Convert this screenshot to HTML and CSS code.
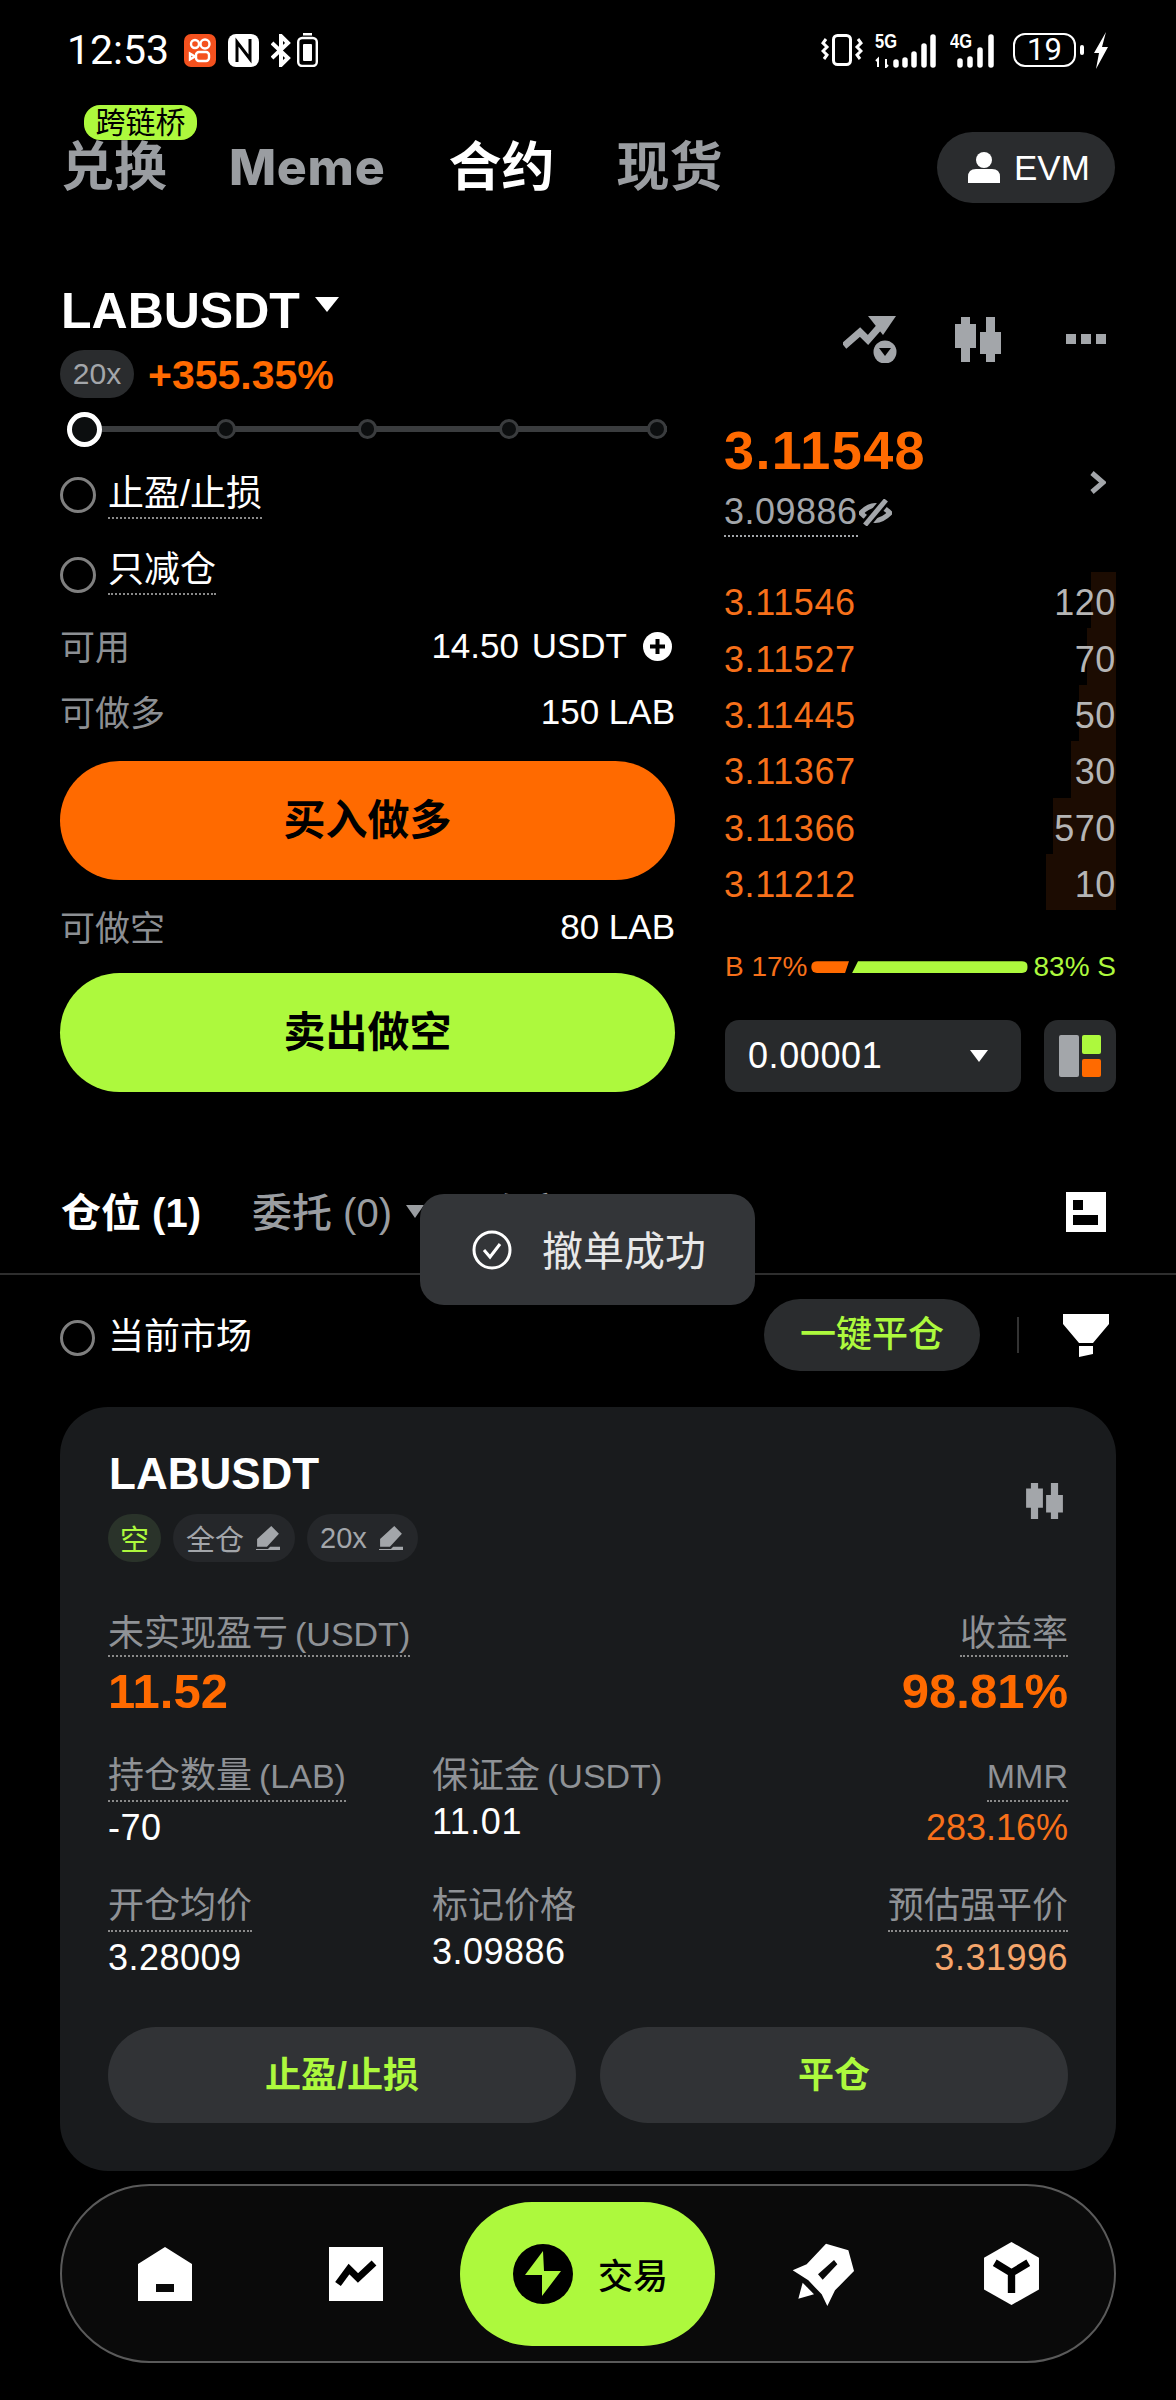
FILE: index.html
```html
<!DOCTYPE html>
<html lang="zh-CN">
<head>
    <meta charset="UTF-8">
    <meta name="viewport" content="width=device-width, initial-scale=1.0">
    <title>LABUSDT 合约</title>
    <link rel="stylesheet" href="styles.css">
</head>
<body>
    <!-- Status bar -->
    <div class="status">
        <span class="clock">12:53</span>
        <svg class="st-app" viewBox="0 0 32 33">
            <rect width="32" height="33" rx="7" fill="#f4511e"/>
            <g fill="none" stroke="#fff" stroke-width="2.4">
                <circle cx="11" cy="10" r="4"/>
                <circle cx="21" cy="10" r="4.5"/>
                <rect x="12" y="18" width="13" height="9" rx="3"/>
                <path d="M11 22.5 6 19.5v6z"/>
            </g>
        </svg>
        <svg class="st-nfc" viewBox="0 0 31 33">
            <rect width="31" height="33" rx="8" fill="#fff"/>
            <path d="M9 28V8l13 17V5" fill="none" stroke="#000" stroke-width="3"/>
        </svg>
        <svg class="st-bt" viewBox="0 0 20 33">
            <path d="M1 9l16 15-7 7V2l7 7L1 24" fill="none" stroke="#fff" stroke-width="4"/>
        </svg>
        <svg class="st-cell" viewBox="0 0 21 34">
            <rect x="6" y="0" width="9" height="2.5" fill="#fff"/>
            <rect x="1.2" y="5" width="18.6" height="28" rx="4" fill="none" stroke="#fff" stroke-width="2.4"/>
            <rect x="6" y="11" width="9" height="17" rx="1" fill="#fff"/>
        </svg>

        <div class="status-right">
            <svg class="st-vib" viewBox="0 0 42 32">
                <rect x="12.5" y="1.5" width="17" height="29" rx="4" fill="none" stroke="#fff" stroke-width="3"/>
                <path d="M5 5 2 9l4 4-4 4 4 4-3 4M37 5l3 4-4 4 4 4-4 4 3 4" fill="none" stroke="#fff" stroke-width="3"/>
            </svg>
            <svg class="st-net" viewBox="0 -6 62 42">
                <text class="net-text" x="0" y="16" textLength="22" lengthAdjust="spacingAndGlyphs">5G</text>
                <path d="M3 35v-8l-2 2M11 27v8l2-2" fill="none" stroke="#fff" stroke-width="2"/>
                <g fill="none" stroke="#fff" stroke-width="5.500" stroke-linecap="round">
                    <path d="M21 33v-3M30 33v-5M39 33v-11M49 33v-19M58 33V5"/>
                </g>
            </svg>
            <svg class="st-net2" viewBox="0 -6 46 42">
                <text class="net-text" x="0" y="16" textLength="22" lengthAdjust="spacingAndGlyphs">4G</text>
                <g fill="none" stroke="#fff" stroke-width="5.500" stroke-linecap="round">
                    <path d="M10 33v-4M20 33v-6M30 33V18M41 33V5"/>
                </g>
            </svg>
            <span class="st-batt">19</span>
            <span class="st-tip"></span>
            <svg class="st-bolt" viewBox="0 0 14 37">
                <path d="M12 0 0 21h5L2 37l12-22H8z" fill="#fff"/>
            </svg>
        </div>
    </div>

    <!-- Top tabs -->
    <div class="top-tabs">
        <div class="top-tab first">兑换<span class="bridge">跨链桥</span></div>
        <div class="top-tab meme">Meme</div>
        <div class="top-tab on">合约</div>
        <div class="top-tab">现货</div>
        <div class="evm">
            <svg class="evm-icon" viewBox="0 0 32 31">
                <circle cx="16" cy="8" r="8" fill="#fff"/>
                <path d="M0 31v-6q0-8 8-8h16q8 0 8 8v6z" fill="#fff"/>
            </svg>
            <span>EVM</span>
        </div>
    </div>

    <!-- Trade panel -->
    <div class="trade">
        <div class="trade-left">
            <div class="pair">LABUSDT<i class="caret caret-pair"></i></div>
            <div class="lev-row">
                <span class="lev">20x</span>
                <span class="gain">+355.35%</span>
            </div>
            <div class="slider">
                <span class="knob"></span>
                <span class="stop"></span>
                <span class="stop"></span>
                <span class="stop"></span>
                <span class="stop"></span>
            </div>
            <div class="check-row">
                <span class="radio"></span>
                <span class="check-label">止盈/止损</span>
            </div>
            <div class="check-row second">
                <span class="radio"></span>
                <span class="check-label">只减仓</span>
            </div>
            <div class="kv avail">
                <span class="k">可用</span>
                <span class="v v-avail">14.50 USDT
                    <svg class="plus" viewBox="0 0 29 29">
                        <circle cx="14.5" cy="14.5" r="14.5" fill="#fff"/>
                        <path d="M14.5 7v15M7 14.5h15" stroke="#000" stroke-width="4"/>
                    </svg>
                </span>
            </div>
            <div class="kv">
                <span class="k">可做多</span>
                <span class="v">150 LAB</span>
            </div>
            <div class="big-btn buy">买入做多</div>
            <div class="kv">
                <span class="k">可做空</span>
                <span class="v">80 LAB</span>
            </div>
            <div class="big-btn sell">卖出做空</div>
        </div>

        <div class="trade-right">
            <div class="tools">
                <svg class="tool-trend" viewBox="0 0 54 48">
                    <path d="M1 31l16-14 8 8 14-16" fill="none" stroke="#a3a6aa" stroke-width="7"/>
                    <path d="M25 1h28L40 20z" fill="#a3a6aa"/>
                    <circle cx="42" cy="37" r="11.5" fill="#a3a6aa"/>
                    <path d="M36 33h12l-6 8z" fill="#000"/>
                </svg>
                <svg class="tool-candle" viewBox="0 0 46 45">
                    <path d="M0 7h6V0h9v7h6v24h-6v14H6V31H0zM25 15h6V0h9v15h6v22h-6v8h-9v-8h-6z" fill="#a3a6aa"/>
                </svg>
                <svg class="tool-more" viewBox="0 0 40 10">
                    <path d="M0 0h10v10H0zM15 0h10v10H15zM30 0h10v10H30z" fill="#a3a6aa"/>
                </svg>
            </div>
            <div class="price-box">
                <div>
                    <div class="price">3.11548</div>
                    <div class="mark">
                        <span class="mark-num">3.09886</span>
                        <svg class="eye-off" viewBox="0 0 33 27">
                            <path d="M2 14Q16-1 31 14 16 29 2 14z" fill="none" stroke="#a3a6aa" stroke-width="5"/>
                            <path d="M5 27 28 0" stroke="#000" stroke-width="10"/>
                            <path d="M6 26 27 1" stroke="#a3a6aa" stroke-width="5"/>
                        </svg>
                    </div>
                </div>
                <svg class="chev" viewBox="0 0 16 23">
                    <path d="M2 2l11 9.500L2 21" fill="none" stroke="#a3a6aa" stroke-width="5"/>
                </svg>
            </div>
            <div class="book">
                <div class="ask"><i class="depth" style="width:25px"></i><span class="ask-p">3.11546</span><span class="ask-q">120</span></div>
                <div class="ask"><i class="depth" style="width:29px"></i><span class="ask-p">3.11527</span><span class="ask-q">70</span></div>
                <div class="ask"><i class="depth" style="width:37px"></i><span class="ask-p">3.11445</span><span class="ask-q">50</span></div>
                <div class="ask"><i class="depth" style="width:45px"></i><span class="ask-p">3.11367</span><span class="ask-q">30</span></div>
                <div class="ask"><i class="depth" style="width:63px"></i><span class="ask-p">3.11366</span><span class="ask-q">570</span></div>
                <div class="ask"><i class="depth" style="width:70px"></i><span class="ask-p">3.11212</span><span class="ask-q">10</span></div>
            </div>
            <div class="ratio">
                <span class="r-b">B 17%</span>
                <i class="bar-b"></i>
                <i class="bar-s"></i>
                <span class="r-s">83% S</span>
            </div>
            <div class="depth-row">
                <div class="step">0.00001<i class="caret caret-step"></i></div>
                <div class="layout-btn">
                    <svg class="layout-icon" viewBox="0 0 42 42">
                        <rect width="20" height="42" rx="2" fill="#a3a6aa"/>
                        <rect x="23" width="19" height="19" rx="2" fill="#adf93d"/>
                        <rect x="23" y="24" width="19" height="18" rx="2" fill="#ff6a00"/>
                    </svg>
                </div>
            </div>
        </div>
    </div>

    <!-- Positions -->
    <div class="pos-tabs">
        <span class="pos-tab on">仓位 (1)</span>
        <span class="pos-tab">委托 (0)</span>
        <i class="caret caret-tab"></i>
        <span class="pos-tab third">资产</span>
        <svg class="pos-icon" viewBox="0 0 40 40">
            <path fill-rule="evenodd" d="M0 0h40v40H0zM7 8v10h10V8zM7 23v10h25V23z" fill="#fff"/>
        </svg>
    </div>

    <div class="toast">
        <svg class="toast-icon" viewBox="0 0 40 40">
            <circle cx="20" cy="20" r="18" fill="none" stroke="#fff" stroke-width="3"/>
            <path d="M12 20l6 7 10-13" fill="none" stroke="#fff" stroke-width="3"/>
        </svg>
        <span>撤单成功</span>
    </div>

    <div class="filter-row">
        <span class="radio small"></span>
        <span class="filter-label">当前市场</span>
        <span class="close-all">一键平仓</span>
        <i class="sep"></i>
        <svg class="funnel" viewBox="0 0 46 43">
            <path d="M0 0h46v10L30 29H16L0 10zM16 32h14v8l-14 3z" fill="#fff"/>
        </svg>
    </div>

    <div class="card">
        <div class="card-head">
            <div>
                <div class="card-title">LABUSDT</div>
                <div class="chips">
                    <span class="chip short">空</span>
                    <span class="chip">全仓
                        <svg class="pen" viewBox="0 0 22 22"><path d="M14 0l7 7-11 12H1v-7zM13 19h9v3H0v-1h11z" fill="#a3a6aa"/></svg>
                    </span>
                    <span class="chip">20x
                        <svg class="pen" viewBox="0 0 22 22"><path d="M14 0l7 7-11 12H1v-7zM13 19h9v3H0v-1h11z" fill="#a3a6aa"/></svg>
                    </span>
                </div>
            </div>
            <svg class="card-candle" viewBox="0 0 46 45">
                <path d="M0 7h6V0h9v7h6v24h-6v14H6V31H0zM25 15h6V0h9v15h6v22h-6v8h-9v-8h-6z" fill="#a3a6aa"/>
            </svg>
        </div>

        <div class="pnl">
            <div class="col">
                <span class="lbl dot">未实现盈亏 <span class="lat">(USDT)</span></span>
                <span class="pnl-num">11.52</span>
            </div>
            <div class="col end">
                <span class="lbl dot">收益率</span>
                <span class="pnl-num">98.81%</span>
            </div>
        </div>

        <div class="stats">
            <div class="col"><span class="lbl dot tall">持仓数量 <span class="lat">(LAB)</span></span><span class="val">-70</span></div>
            <div class="col"><span class="lbl">保证金 <span class="lat">(USDT)</span></span><span class="val">11.01</span></div>
            <div class="col end"><span class="lbl dot tall lat">MMR</span><span class="val orange">283.16%</span></div>
            <div class="col"><span class="lbl dot tall">开仓均价</span><span class="val">3.28009</span></div>
            <div class="col"><span class="lbl">标记价格</span><span class="val">3.09886</span></div>
            <div class="col end"><span class="lbl dot tall">预估强平价</span><span class="val peach">3.31996</span></div>
        </div>

        <div class="actions">
            <span class="act">止盈/止损</span>
            <span class="act">平仓</span>
        </div>
    </div>

    <!-- Bottom nav -->
    <div class="nav">
        <svg class="nav-home" viewBox="0 0 54 54">
            <path fill-rule="evenodd" d="M27 0l27 17v37H0V17zM18 37v8h18v-8z" fill="#fff"/>
        </svg>
        <svg class="nav-chart" viewBox="0 0 54 54">
            <rect width="54" height="54" fill="#fff"/>
            <path d="M9 37l11-15 9 9L45 16" fill="none" stroke="#000" stroke-width="7"/>
        </svg>
        <div class="nav-active">
            <svg class="trade-icon" viewBox="0 0 60 60">
                <circle cx="30" cy="30" r="30" fill="#000"/>
                <path d="M30 7 12 31h17v21l19-25H31z" fill="#adf93d"/>
            </svg>
            <span>交易</span>
        </div>
        <svg class="nav-rocket" viewBox="30 30 200 200">
            <path fill-rule="evenodd" d="M138 38l67 20 17 62-57 58-23 47-17-35-40-42-47-30 42-18zM162 87l-48 43 14 16 44-46z" fill="#fff"/>
            <path d="M68 155l34 35-47 13z" fill="#fff"/>
        </svg>
        <svg class="nav-cube" viewBox="613 38 164 188">
            <path d="M695 38l82 47v95l-82 46-82-46V85z" fill="#fff"/>
            <path d="M645 100l50 30 50-30M695 130v60" fill="none" stroke="#000" stroke-width="22"/>
        </svg>
    </div>
</body>
</html>
```

FILE: styles.css
```css
* {
    margin: 0;
    padding: 0;
    box-sizing: border-box;
}

body {
    position: relative;
    width: 1176px;
    height: 2400px;
    background: #000;
    color: #fff;
    font-family: "Liberation Sans", "Noto Sans CJK SC", sans-serif;
    overflow: hidden;
}

i {
    display: block;
}

svg {
    display: block;
    flex: none;
}

.caret {
    width: 0;
    height: 0;
    border-style: solid;
    border-color: #fff transparent transparent;
}

/* Status bar */
.status {
    display: flex;
    align-items: center;
    height: 100px;
    padding: 0 68px 0 67px;
}

.clock {
    font-family: Roboto, sans-serif;
    font-size: 41px;
    width: 117px;
}

.st-app {
    width: 32px;
    height: 33px;
}

.st-nfc {
    width: 31px;
    height: 33px;
    margin-left: 12px;
}

.st-bt {
    width: 20px;
    height: 33px;
    margin-left: 12px;
}

.st-cell {
    width: 21px;
    height: 34px;
    margin-left: 6px;
}

.status-right {
    display: flex;
    align-items: center;
    margin-left: auto;
}

.st-vib {
    width: 42px;
    height: 32px;
}

.st-net {
    width: 62px;
    height: 42px;
    margin: 0 0 6px 12px;
}

.st-net2 {
    width: 46px;
    height: 42px;
    margin: 0 0 6px 13px;
}

.net-text {
    font-family: "Liberation Sans", sans-serif;
    font-size: 21px;
    font-weight: 700;
    fill: #fff;
}

.st-batt {
    width: 63px;
    height: 34px;
    margin-left: 17px;
    border: 2.5px solid #fff;
    border-radius: 12px;
    font-family: Roboto, sans-serif;
    font-size: 31px;
    line-height: 29px;
    text-align: center;
}

.st-tip {
    width: 4px;
    height: 10px;
    margin-left: 4px;
    background: #fff;
    border-radius: 2px;
}

.st-bolt {
    width: 14px;
    height: 37px;
    margin-left: 10px;
}

/* Top tabs */
.top-tabs {
    display: flex;
    align-items: center;
    height: 71px;
    margin-top: 32px;
    padding: 0 61px;
}

.top-tab {
    position: relative;
    font-size: 53px;
    font-weight: 700;
    line-height: 71px;
    color: #9a9da1;
    margin-right: 62px;
}

.top-tab.on {
    color: #fff;
}

.top-tab.meme {
    margin-right: 63px;
    font-family: Inter, sans-serif;
    font-size: 50px;
    font-weight: 800;
    letter-spacing: 0.7px;
}

.bridge {
    position: absolute;
    left: 23px;
    top: -27px;
    width: 113px;
    height: 35px;
    background: #adf93d;
    border-radius: 16px;
    color: #000;
    font-size: 30px;
    font-weight: 400;
    line-height: 35px;
    text-align: center;
}

.evm {
    display: flex;
    align-items: center;
    gap: 14px;
    width: 178px;
    height: 71px;
    margin-left: auto;
    padding-left: 31px;
    background: #2a2c2e;
    border-radius: 36px;
    font-size: 35px;
}

.evm-icon {
    width: 32px;
    height: 31px;
}

/* Trade panel */
.trade {
    display: grid;
    grid-template-columns: 615px 391px;
    column-gap: 50px;
    margin-top: 78px;
    padding-left: 60px;
}

.pair {
    display: flex;
    align-items: center;
    height: 60px;
    padding-left: 1px;
    font-size: 50px;
    font-weight: 700;
    line-height: 60px;
}

.caret-pair {
    margin: -14px 0 0 15px;
    border-width: 15px 12px 0;
}

.lev-row {
    display: flex;
    align-items: center;
    height: 48px;
    margin-top: 9px;
}

.lev {
    width: 74px;
    height: 48px;
    background: #2a2c2e;
    border-radius: 24px;
    color: #a3a6aa;
    font-size: 30px;
    line-height: 48px;
    text-align: center;
}

.gain {
    margin: 2px 0 0 14px;
    color: #ff6a00;
    font-size: 41px;
    font-weight: 700;
}

.slider {
    display: flex;
    align-items: center;
    position: relative;
    width: 600px;
    height: 36px;
    margin: 13px 0 0 7px;
    background: linear-gradient(#3a3c3e, #3a3c3e) center / 100% 6px no-repeat;
}

.knob {
    width: 35px;
    height: 35px;
    background: #0c0e0f;
    border: 5px solid #fff;
    border-radius: 50%;
}

.stop {
    width: 20px;
    height: 20px;
    margin-left: 122px;
    background: #0c0e0f;
    border: 3px solid #3a3c3e;
    border-radius: 50%;
}

.knob + .stop {
    margin-left: 114px;
}

.stop:last-child {
    margin-left: 128px;
}

.check-row {
    display: flex;
    align-items: flex-start;
    margin-top: 26px;
}

.check-row.second {
    margin-top: 34px;
}

.radio {
    width: 36px;
    height: 36px;
    margin-top: 4px;
    border: 3px solid #7f7f7f;
    border-radius: 50%;
}

.radio.small {
    width: 35px;
    height: 36px;
    margin: 5px 0 0;
}

.check-label {
    margin: 1px 0 0 12px;
    padding-bottom: 3px;
    border-bottom: 2px dotted #8a8a8a;
    font-size: 36px;
    line-height: 40px;
}

.second .check-label {
    margin-top: -3px;
}

.kv {
    display: flex;
    align-items: center;
    justify-content: space-between;
    height: 40px;
    margin-top: 26px;
}

.kv.avail {
    margin-top: 30px;
}

.k {
    margin-top: -2px;
    color: #8c8f93;
    font-size: 35px;
}

.v {
    margin-top: 2px;
    font-size: 35px;
}

.v-avail {
    display: flex;
    align-items: center;
    gap: 16px;
    word-spacing: 3px;
}

.plus {
    width: 29px;
    height: 29px;
    margin-right: 3px;
}

.big-btn {
    height: 119px;
    margin-top: 27px;
    border-radius: 60px;
    color: #000;
    font-size: 42px;
    font-weight: 700;
    line-height: 119px;
    text-align: center;
}

.kv + .buy {
    margin-top: 30px;
}

.buy {
    background: #ff6a00;
}

.sell {
    background: #adf93d;
}

.tools {
    display: flex;
    align-items: center;
    justify-content: flex-end;
    height: 48px;
    margin-top: 34px;
    padding-right: 10px;
}

.tool-trend {
    width: 54px;
    height: 48px;
}

.tool-candle {
    width: 46px;
    height: 45px;
    margin-left: 58px;
}

.tool-more {
    width: 40px;
    height: 10px;
    margin-left: 65px;
}

.price-box {
    display: flex;
    align-items: center;
    justify-content: space-between;
    margin-top: 57px;
    padding-right: 10px;
}

.price {
    margin-left: -1px;
    color: #ff6a00;
    font-size: 54px;
    font-weight: 700;
    letter-spacing: 1.4px;
    line-height: 60px;
}

.mark {
    display: flex;
    align-items: flex-start;
    margin: 12px 0 0 -1px;
}

.mark-num {
    padding-bottom: 3px;
    border-bottom: 2px dotted #a3a6aa;
    color: #a3a6aa;
    font-size: 36px;
    letter-spacing: 0.5px;
    line-height: 40px;
}

.eye-off {
    width: 33px;
    height: 27px;
    margin: 7px 0 0 1px;
}

.chev {
    width: 16px;
    height: 23px;
    margin-top: 8px;
}

.book {
    margin-top: 35px;
}

.ask {
    display: flex;
    align-items: center;
    justify-content: space-between;
    position: relative;
    height: 56.4px;
    padding-top: 6px;
    font-size: 36px;
    letter-spacing: 0.6px;
}

.depth {
    position: absolute;
    top: 0;
    right: 0;
    bottom: 0;
    background: #1c0c02;
}

.ask-p {
    margin-left: -1px;
    color: #f7701a;
}

.ask-q {
    position: relative;
    color: #b5b5b5;
}

.ratio {
    display: flex;
    align-items: center;
    height: 40px;
    margin-top: 37px;
    font-size: 28px;
}

.r-b {
    width: 87px;
    color: #f7701a;
}

.r-s {
    margin-left: 6px;
    color: #adf93d;
    white-space: nowrap;
}

.bar-b {
    width: 38px;
    height: 12px;
    background: #ff6a00;
    border-radius: 6px 0 0 6px;
    clip-path: polygon(0 0, 100% 0, calc(100% - 4px) 100%, 0 100%);
}

.bar-s {
    width: 177px;
    height: 12px;
    margin-left: 3px;
    background: #adf93d;
    border-radius: 0 6px 6px 0;
    clip-path: polygon(6px 0, 100% 0, 100% 100%, 0 100%);
}

.depth-row {
    display: flex;
    justify-content: space-between;
    margin-top: 33px;
}

.step {
    display: flex;
    align-items: center;
    justify-content: space-between;
    width: 296px;
    height: 72px;
    padding: 0 33px 0 23px;
    background: #282a2c;
    border-radius: 14px;
    font-size: 36px;
    letter-spacing: 0.6px;
}

.caret-step {
    border-width: 12px 9.5px 0;
}

.layout-btn {
    display: flex;
    align-items: center;
    justify-content: center;
    width: 72px;
    height: 72px;
    background: #282a2c;
    border-radius: 14px;
}

.layout-icon {
    width: 42px;
    height: 42px;
}

/* Positions */
.pos-tabs {
    display: flex;
    align-items: center;
    height: 104px;
    margin-top: 79px;
    padding: 0 70px 24px 61px;
    border-bottom: 2px solid #2e2e2e;
}

.pos-tab {
    color: #9a9da1;
    font-size: 40px;
    font-weight: 500;
    white-space: nowrap;
}

.pos-tab.on {
    margin-right: 51px;
    color: #fff;
    font-weight: 700;
}

.pos-tab.third {
    margin-left: 62px;
}

.caret-tab {
    margin: 2px 0 0 14px;
    border-width: 13px 9px 0;
    border-top-color: #9a9da1;
}

.pos-icon {
    width: 40px;
    height: 40px;
    margin: 4px 0 0 auto;
}

.toast {
    position: absolute;
    left: 420px;
    top: 1194px;
    display: flex;
    align-items: center;
    gap: 30px;
    width: 335px;
    height: 111px;
    padding-left: 52px;
    background: #333538;
    border-radius: 24px;
    color: #e8e8e8;
    font-size: 41px;
}

.toast span {
    margin-top: -4px;
}

.toast-icon {
    width: 40px;
    height: 40px;
}

.filter-row {
    display: flex;
    align-items: center;
    height: 72px;
    margin-top: 24px;
    padding: 0 67px 0 60px;
}

.filter-label {
    margin: -5px 0 0 13px;
    font-size: 36px;
}

.close-all {
    width: 216px;
    height: 72px;
    margin-left: auto;
    background: #2a2c2e;
    border-radius: 36px;
    color: #adf93d;
    font-size: 36px;
    font-weight: 500;
    line-height: 72px;
    text-align: center;
}

.sep {
    width: 2px;
    height: 36px;
    margin-left: 37px;
    background: #333;
}

.funnel {
    width: 46px;
    height: 43px;
    margin-left: 44px;
}

/* Position card */
.card {
    height: 764px;
    margin: 36px 60px 0;
    padding: 42px 48px 0;
    background: #191b1d;
    border-radius: 48px;
}

.card-head {
    display: flex;
    align-items: center;
    justify-content: space-between;
}

.card-title {
    padding-left: 1px;
    font-size: 44px;
    font-weight: 700;
    line-height: 50px;
}

.chips {
    display: flex;
    gap: 12px;
    margin-top: 15px;
}

.chip {
    display: flex;
    align-items: center;
    gap: 12px;
    height: 48px;
    padding: 0 15px 0 13px;
    background: #25272a;
    border-radius: 24px;
    color: #a3a6aa;
    font-size: 29px;
}

.chip.short {
    padding: 0 12px;
    background: #2a332a;
    color: #adf93d;
}

.pen {
    width: 24px;
    height: 24px;
}

.card-candle {
    width: 37px;
    height: 36px;
    margin: 0 5px 9px 0;
}

.pnl {
    display: flex;
    justify-content: space-between;
    margin-top: 52px;
}

.col {
    display: flex;
    flex-direction: column;
    align-items: flex-start;
}

.col.end {
    align-items: flex-end;
}

.lbl {
    color: #8f9296;
    font-size: 36px;
    line-height: 40px;
    word-spacing: -3px;
}

.lat {
    font-size: 34px;
}

.lbl.dot {
    padding-bottom: 1px;
    border-bottom: 2px dotted #8a8a8a;
}

.lbl.dot.tall {
    padding-bottom: 4px;
}

.pnl-num {
    margin-top: 6px;
    color: #ff6a00;
    font-size: 49px;
    font-weight: 700;
    line-height: 56px;
}

.stats {
    display: grid;
    grid-template-columns: 324px 1fr auto;
    row-gap: 38px;
    margin-top: 37px;
}

.val {
    margin-top: 6px;
    font-size: 36px;
    letter-spacing: 0.5px;
    line-height: 40px;
}

.val.orange {
    color: #f7701a;
    letter-spacing: 0;
}

.peach {
    color: #f5a56b;
}

.actions {
    display: grid;
    grid-template-columns: 1fr 1fr;
    gap: 24px;
    margin-top: 49px;
}

.act {
    height: 96px;
    background: #313336;
    border-radius: 48px;
    color: #adf93d;
    font-size: 36px;
    font-weight: 700;
    line-height: 98px;
    text-align: center;
}

/* Bottom nav */
.nav {
    display: flex;
    align-items: center;
    height: 179px;
    margin: 13px 60px 0;
    padding-left: 76px;
    background: #0a0a0a;
    border: 2px solid #5a5a5a;
    border-radius: 90px;
}

.nav-home,
.nav-chart {
    width: 54px;
    height: 54px;
}

.nav-chart {
    margin-left: 137px;
}

.nav-active {
    display: flex;
    align-items: center;
    gap: 25px;
    width: 255px;
    height: 144px;
    margin-left: 77px;
    padding-left: 53px;
    background: #adf93d;
    border-radius: 72px;
    color: #000;
    font-size: 35px;
    font-weight: 500;
}

.trade-icon {
    width: 60px;
    height: 60px;
}

.nav-rocket {
    width: 66.7px;
    height: 66.7px;
    margin-left: 75px;
}

.nav-cube {
    width: 55px;
    height: 63px;
    margin-left: 127px;
}
```
